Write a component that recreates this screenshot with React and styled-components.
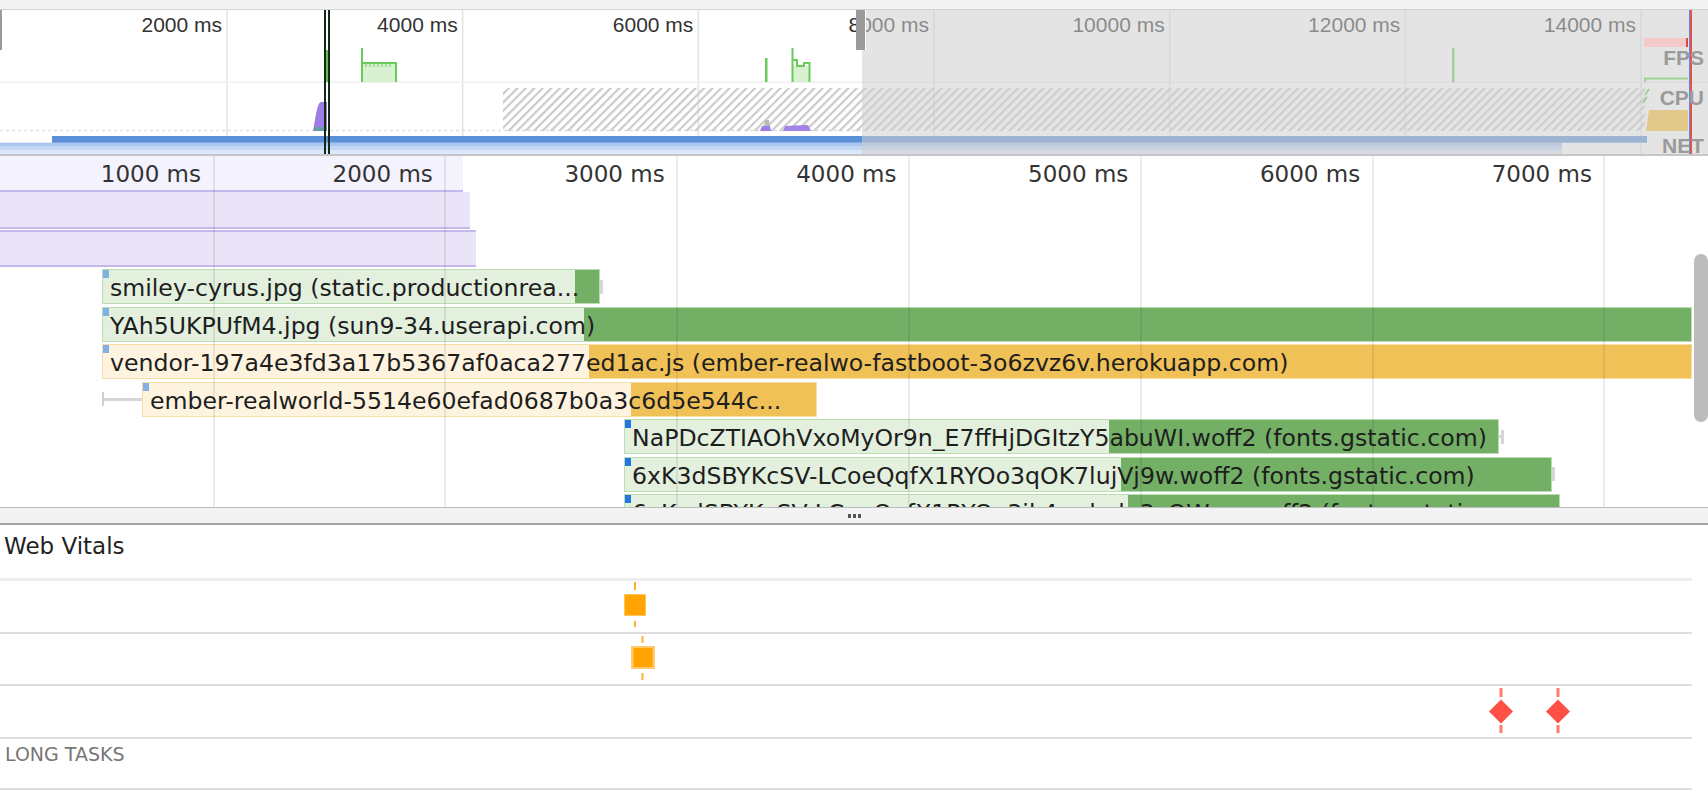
import React from 'react'
import styled, { createGlobalStyle } from 'styled-components'

const GlobalStyle = createGlobalStyle`
  html, body {
    margin: 0;
    padding: 0;
    background: #fff;
    overflow: hidden;
  }
`

// overview: 2000 ms per 235.67px, main flame chart: 1000 ms per 231.83px
const ovX = (ms) => -8.67 + ms * 0.117835
const mX = (ms) => -18.33 + ms * 0.23183

const overviewTicks = [2000, 4000, 6000, 8000, 10000, 12000, 14000]
const mainTicks = [1000, 2000, 3000, 4000, 5000, 6000, 7000]

const GREEN = { light: '#e3f0de', dark: '#73b066', border: '#bcdcb4' }
const YELLOW = { light: '#fdf3df', dark: '#f0c157', border: '#f6dea8' }

const requests = [
  { text: 'smiley-cyrus.jpg (static.productionrea...', start: 519, split: 2555, end: 2667, tail: 2680, kind: GREEN, mark: '#7fb1e6' },
  { text: 'YAh5UKPUfM4.jpg (sun9-34.userapi.com)', start: 519, split: 2594, end: 7378, kind: GREEN, mark: '#7fb1e6' },
  { text: 'vendor-197a4e3fd3a17b5367af0aca277ed1ac.js (ember-realwo-fastboot-3o6zvz6v.herokuapp.com)', start: 519, split: 2615, end: 7378, kind: YELLOW, mark: '#7fb1e6' },
  { text: 'ember-realworld-5514e60efad0687b0a3c6d5e544c...', lead: 519, start: 692, split: 2797, end: 3603, kind: YELLOW, mark: '#7fb1e6' },
  { text: 'NaPDcZTIAOhVxoMyOr9n_E7ffHjDGItzY5abuWI.woff2 (fonts.gstatic.com)', start: 2771, split: 4858, end: 6545, tail: 6567, kind: GREEN, mark: '#2477e3' },
  { text: '6xK3dSBYKcSV-LCoeQqfX1RYOo3qOK7lujVj9w.woff2 (fonts.gstatic.com)', start: 2771, split: 4910, end: 6774, tail: 6788, kind: GREEN, mark: '#2477e3' },
  { text: '6xKydSBYKcSV-LCoeQqfX1RYOo3ik4zwlxdu3cOWxw.woff2 (fonts.gstatic.co...', start: 2771, split: 4940, end: 6808, kind: GREEN, mark: '#2477e3' },
]

const Page = styled.div`
  width: 1708px;
  height: 790px;
  overflow: hidden;
  background: #fff;
  font-family: "DejaVu Sans", sans-serif;
  color: #222;
`

const TopStrip = styled.div`
  height: 9px;
  background: #f3f3f3;
  border-bottom: 1px solid #d2d2d2;
`

const Overview = styled.div`
  position: relative;
  height: 144px;
  border-bottom: 2px solid #c6c6c6;
  overflow: hidden;
  background: #fff;
`

const Layer = styled.svg`
  position: absolute;
  left: 0;
  top: 0;
  width: 1708px;
  height: 144px;
  display: block;
`

const OvLabel = styled.span`
  position: absolute;
  top: 3px;
  transform: translateX(-100%);
  font: 21px/24px "Liberation Sans", Arial, sans-serif;
  color: #333;
  white-space: nowrap;
`

const Shade = styled.div`
  position: absolute;
  top: 0;
  bottom: 0;
  left: 862px;
  right: 0;
  background: rgba(207, 207, 207, 0.56);
`

const Handle = styled.div`
  position: absolute;
  top: 0;
  height: 40px;
  left: ${(p) => p.$left}px;
  width: ${(p) => p.$w}px;
  background: #9b9b9b;
  border-right: ${(p) => (p.$edge ? '1px solid #fff' : 'none')};
`

const Cursor = styled.div`
  position: absolute;
  top: 0;
  bottom: 0;
  left: ${(p) => p.$left}px;
  width: ${(p) => p.$w}px;
  background: ${(p) => p.$color};
`

const TrackLabel = styled.span`
  position: absolute;
  right: 4px;
  top: ${(p) => p.$top}px;
  font: bold 21px/24px "Liberation Sans", Arial, sans-serif;
  color: #9a9a9a;
`

const Main = styled.div`
  position: relative;
  height: 351px;
  border-bottom: 1px solid #bdbdbd;
  overflow: hidden;
  background: #fff;
`

const RulerRow = styled.div`
  height: 36px;
`

const FrameShade = styled.div`
  box-sizing: border-box;
  height: 36px;
  background: #f4f2fd;
  border-bottom: 2px solid #c5b6ee;
`

const FrameBar = styled.div`
  box-sizing: border-box;
  height: 37px;
  background: #e9e4f8;
  border-bottom: 2px solid #c5b6ee;
  border-top: ${(p) => (p.$top ? '2px solid #c5b6ee' : 'none')};
  margin-top: ${(p) => (p.$top ? 1 : 0)}px;
  margin-bottom: ${(p) => (p.$top ? 2 : 0)}px;
`

const FlameRow = styled.div`
  display: flex;
  align-items: center;
  height: 35px;
  margin-bottom: 2.5px;
`

const Whisker = styled.div`
  flex: none;
  box-sizing: border-box;
  height: 14px;
  background: linear-gradient(#d6d6d6, #d6d6d6) center / 100% 3px no-repeat;
  border-left: ${(p) => (p.$lead ? '2px solid #d0d0d0' : 'none')};
  border-right: ${(p) => (p.$lead ? 'none' : '3px solid #d6d6d6')};
`

const FlameBar = styled.div`
  position: relative;
  flex: none;
  box-sizing: border-box;
  height: 35px;
  border: 1px solid ${(p) => p.$kind.border};
  background: linear-gradient(
    to right,
    ${(p) => p.$kind.light} 0 var(--split),
    ${(p) => p.$kind.dark} var(--split)
  );
  padding: 3px 0 0 7px;
  line-height: 31px;
  font-size: 23.6px;
  color: #1e1e1e;
  white-space: nowrap;
  overflow: hidden;
`

const StartMark = styled.span`
  position: absolute;
  left: 0;
  top: 0;
  width: 6px;
  height: 8px;
  background: ${(p) => p.$color};
`

const GridLine = styled.div`
  position: absolute;
  top: 0;
  bottom: 0;
  width: 2px;
  background: rgba(0, 0, 0, 0.075);
`

const RulerLabel = styled.span`
  position: absolute;
  top: 4px;
  transform: translateX(-100%);
  font-size: 23px;
  line-height: 28px;
  color: #333;
  white-space: nowrap;
`

const Scrollbar = styled.div`
  position: absolute;
  right: 0;
  top: 98px;
  width: 14px;
  height: 168px;
  border-radius: 7px;
  background: #bcbcbc;
`

const Divider = styled.div`
  height: 15px;
  background: #f3f3f3;
  border-bottom: 2px solid #a5a5a5;
  display: flex;
  justify-content: center;
  align-items: center;
  gap: 2px;
`

const Dot = styled.span`
  width: 3px;
  height: 4px;
  background: #555;
`

const Vitals = styled.div`
  width: 1692px;
`

const VitalsTitle = styled.div`
  box-sizing: border-box;
  height: 56px;
  padding: 7px 0 0 4px;
  font-size: 23px;
  line-height: 28px;
  color: #222;
  border-bottom: 3px solid #eeeeee;
`

const Lane = styled.div`
  position: relative;
  height: ${(p) => p.$h}px;
  border-bottom: 2px solid #dedede;
`

const LaneLabel = styled.div`
  padding: 4px 0 0 5px;
  font-size: 19px;
  line-height: 22px;
  color: #777;
`

const Marker = styled.div`
  position: absolute;
  top: ${(p) => p.$top}px;
  transform: translateX(-50%);
  display: flex;
  flex-direction: column;
  align-items: center;
  gap: ${(p) => p.$gap}px;
`

const Dash = styled.span`
  width: ${(p) => p.$w || 2}px;
  height: ${(p) => p.$h}px;
  background: ${(p) => p.$color};
`

const Square = styled.span`
  box-sizing: border-box;
  width: ${(p) => p.$size}px;
  height: ${(p) => p.$size}px;
  background: #ffa400;
  border: ${(p) => p.$border};
`

const Diamond = styled.span`
  width: 17px;
  height: 17px;
  margin: 3.5px 0;
  background: #ff5046;
  transform: rotate(45deg);
`

const OverviewGraph = () => (
  <Layer viewBox="0 0 1708 144">
    <defs>
      <pattern id="hatch" width="6" height="6" patternUnits="userSpaceOnUse" patternTransform="rotate(45)">
        <rect width="2.2" height="6" fill="#cbcbcb" />
      </pattern>
    </defs>
    {overviewTicks.map((t) => (
      <rect key={t} x={ovX(t) - 0.75} y="0" width="1.5" height="144" fill="#e3e3e3" />
    ))}
    <rect x="0" y="71.5" width="1708" height="1.5" fill="#efefef" />

    {/* FPS */}
    <rect x="325.5" y="40" width="2.5" height="32" fill="#5dc24e" />
    <polygon points="362,72 362,53 396,53 396,72" fill="#d7f1d1" />
    <polyline points="362,72 362,38 362,53 396,53 396,72" fill="none" stroke="#6acb5d" strokeWidth="2" />
    {[366, 370, 374, 378, 382, 386, 390].map((x) => (
      <line key={x} x1={x} x2={x} y1="53" y2="57" stroke="#6acb5d" strokeWidth="1" />
    ))}
    <rect x="765" y="48" width="2.5" height="24" fill="#6acb5d" />
    <polygon points="793,72 793,56 810,56 810,72" fill="#d7f1d1" />
    <line x1="792.5" x2="792.5" y1="38" y2="72" stroke="#6acb5d" strokeWidth="2" />
    <polyline points="793,50 797,50 797,56 804,56 804,53 809.5,53 809.5,72" fill="none" stroke="#6acb5d" strokeWidth="2" />
    <rect x="1452" y="38" width="2.5" height="34" fill="#6acb5d" />

    {/* CPU */}
    <line x1="0" x2="862" y1="120.5" y2="120.5" stroke="#e0e0e0" strokeWidth="1.5" strokeDasharray="3 3" />
    <rect x="503" y="78" width="1142" height="43" fill="url(#hatch)" />
    <path d="M313,121 C315,112 317,92 321,92 L327,92 L327,121 Z" fill="#9b7de3" />
    <rect x="314" y="117" width="13" height="4" fill="#6b9aa8" />
    <path d="M760,121 L762,116 L770,116 L771,121 Z" fill="#9b7de3" />
    <path d="M764,116 L765,110 L769,110 L770,116 Z" fill="#b9b9b9" />
    <path d="M783,121 L785,116 L808,115 L811,121 Z" fill="#a184e6" />

    {/* NET */}
    <rect x="0" y="132.7" width="1562" height="4" fill="#a8c6ee" />
    <rect x="0" y="136.7" width="1562" height="4" fill="#c3d8f4" />
    <rect x="0" y="140.7" width="1562" height="3.3" fill="#dce8f9" />
    <rect x="52" y="126" width="1595" height="6.7" fill="#5b8fd7" />
  </Layer>
)

const OverviewTail = () => (
  <Layer viewBox="0 0 1708 144">
    <rect x="1644" y="28" width="42" height="9" fill="#f3c9c9" />
    <rect x="1686" y="28" width="2" height="9" fill="#e0483f" />
    <path d="M1645,72 V68.5 H1688" stroke="#9fd592" strokeWidth="2" fill="none" />
    <path d="M1646,121 L1649,100 L1688,100 L1688,121 Z" fill="#e3c88c" />
    <path d="M1645,85 l4,-6 M1643,93 l4,-6" stroke="#8fd180" strokeWidth="1.5" />
  </Layer>
)

const Request = ({ r }) => {
  const left = mX(r.lead ?? r.start)
  return (
    <FlameRow>
      {r.lead != null && (
        <Whisker $lead style={{ marginLeft: left, width: mX(r.start) - left }} />
      )}
      <FlameBar
        $kind={r.kind}
        style={{
          marginLeft: r.lead != null ? 0 : left,
          width: mX(r.end) - mX(r.start),
          '--split': `${mX(r.split) - mX(r.start)}px`,
        }}
      >
        <StartMark $color={r.mark} />
        {r.text}
      </FlameBar>
      {r.tail != null && <Whisker style={{ width: mX(r.tail) - mX(r.end) }} />}
    </FlameRow>
  )
}

export default function App() {
  return (
    <Page>
      <GlobalStyle />
      <TopStrip />

      <Overview>
        <OverviewGraph />
        {overviewTicks.map((t) => (
          <OvLabel key={t} style={{ left: ovX(t) - 5 }}>{t} ms</OvLabel>
        ))}
        <Shade />
        <OverviewTail />
        <Handle $left={0} $w={2} />
        <Handle $left={856} $w={9} $edge />
        <Cursor $left={324} $w={2} $color="#172717" />
        <Cursor $left={328} $w={2} $color="#172717" />
        <Cursor $left={1688.5} $w={1.8} $color="#5a8edb" />
        <Cursor $left={1690.3} $w={1.5} $color="#e2534d" />
        <TrackLabel $top={36}>FPS</TrackLabel>
        <TrackLabel $top={76}>CPU</TrackLabel>
        <TrackLabel $top={124}>NET</TrackLabel>
      </Overview>

      <Main>
        <RulerRow>
          <FrameShade style={{ width: mX(2076) }} />
        </RulerRow>
        <FrameBar style={{ width: mX(2106) }} />
        <FrameBar $top style={{ width: mX(2132) }} />
        {requests.map((r) => (
          <Request key={r.text} r={r} />
        ))}
        {mainTicks.map((t) => (
          <GridLine key={t} style={{ left: mX(t) - 1 }} />
        ))}
        {mainTicks.map((t) => (
          <RulerLabel key={t} style={{ left: mX(t) - 12.5 }}>{t} ms</RulerLabel>
        ))}
        <Scrollbar />
      </Main>

      <Divider>
        <Dot />
        <Dot />
        <Dot />
      </Divider>

      <Vitals>
        <VitalsTitle>Web Vitals</VitalsTitle>
        <Lane $h={51}>
          <Marker $top={1} $gap={4} style={{ left: mX(2818) }}>
            <Dash $h={8} $color="#ffb02e" />
            <Square $size={22} $border="1px solid #ffc45a" />
            <Dash $h={6} $color="#ffb02e" style={{ marginTop: 1 }} />
          </Marker>
        </Lane>
        <Lane $h={50}>
          <Marker $top={2} $gap={3} style={{ left: mX(2851) }}>
            <Dash $h={7} $color="#ffb02e" />
            <Square $size={23} $border="2px solid #ffca6a" />
            <Dash $h={7} $color="#ffb02e" style={{ marginTop: 1 }} />
          </Marker>
        </Lane>
        <Lane $h={51}>
          {[6554, 6800].map((t) => (
            <Marker key={t} $top={2} $gap={2} style={{ left: mX(t) }}>
              <Dash $h={9} $w={3} $color="#ff7a70" />
              <Diamond />
              <Dash $h={8} $w={3} $color="#ff7a70" />
            </Marker>
          ))}
        </Lane>
        <Lane $h={49}>
          <LaneLabel>LONG TASKS</LaneLabel>
        </Lane>
      </Vitals>
    </Page>
  )
}
